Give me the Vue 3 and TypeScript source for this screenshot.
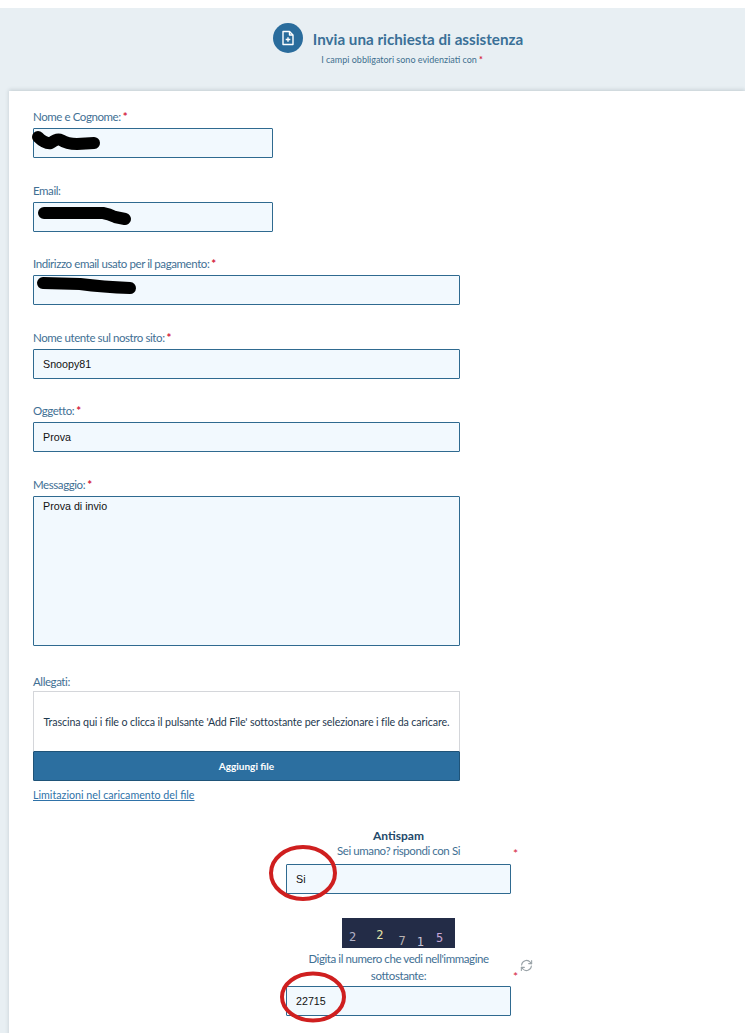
<script setup lang="ts">
interface Field {
  label: string;
  value: string;
  required: boolean;
  short?: boolean;
  scribble?: string;
}

const fields: Field[] = [
  { label: 'Nome e Cognome:', value: '', required: true, short: true, scribble: 'M5 9 Q12 16 18 15 Q24 10 28 12 Q34 16 44 16 L61 15' },
  { label: 'Email:', value: '', required: false, short: true, scribble: 'M11 11 L70 11 Q76 12 82 15 L92 17' },
  { label: 'Indirizzo email usato per il pagamento:', value: '', required: true, scribble: 'M10 8 L47 9 Q70 12 97 13' },
  { label: 'Nome utente sul nostro sito:', value: 'Snoopy81', required: true },
  { label: 'Oggetto:', value: 'Prova', required: true },
];

const captchaDigits = [
  { char: '2', color: '#b4b2c8', top: 13, gap: 7 },
  { char: '2', color: '#e6e6a8', top: 11, gap: 20 },
  { char: '7', color: '#b8b2b0', top: 17, gap: 15 },
  { char: '1', color: '#c8c4d8', top: 18, gap: 11 },
  { char: '5', color: '#c8a8d8', top: 14, gap: 12 },
];

const message = 'Prova di invio';
</script>

<template>
  <div class="page">
    <header class="banner">
      <div class="banner__title-row">
        <span class="banner__icon">
          <svg width="16" height="16" viewBox="0 0 16 16" fill="none" stroke="#fff" stroke-width="1.4" stroke-linejoin="round">
            <path d="M3 1.5h6.5L13 5v9.5H3z" />
            <path d="M9.5 1.5V5H13" />
            <path d="M8 7.2v4.6M5.7 9.5h4.6" />
          </svg>
        </span>
        <h1 class="banner__title">Invia una richiesta di assistenza</h1>
      </div>
      <p class="banner__note">I campi obbligatori sono evidenziati con<span class="star">*</span></p>
    </header>

    <main class="card">
      <div v-for="field in fields" :key="field.label" class="field">
        <label class="field__label">
          {{ field.label }}<span v-if="field.required" class="star">*</span>
        </label>
        <div class="field__control" :class="{ 'field__control--short': field.short }">
          <input class="input" type="text" :value="field.value" />
          <svg v-if="field.scribble" class="scribble" width="110" height="30" viewBox="0 0 110 30" fill="none">
            <path :d="field.scribble" stroke="#000" stroke-width="12" stroke-linecap="round" stroke-linejoin="round" />
          </svg>
        </div>
      </div>

      <div class="field field--message">
        <label class="field__label">Messaggio:<span class="star">*</span></label>
        <div class="field__control">
          <textarea class="input input--area" :value="message"></textarea>
        </div>
      </div>

      <div class="attachments">
        <div class="attachments__label">Allegati:</div>
        <div class="dropzone">Trascina qui i file o clicca il pulsante 'Add File' sottostante per selezionare i file da caricare.</div>
        <button class="add-button" type="button">Aggiungi file</button>
        <a class="limits" href="#">Limitazioni nel caricamento del file</a>
      </div>

      <section class="antispam">
        <div class="antispam__title">Antispam</div>
        <div class="antispam__question">Sei umano? rispondi con Si</div>
        <span class="star star--side star--first">*</span>
        <div class="field__control">
          <input class="input" type="text" value="Si" />
          <svg class="ring ring--first" width="72" height="60" viewBox="0 0 72 60" fill="none">
            <ellipse cx="35" cy="30" rx="32" ry="26" stroke="#cf1f1f" stroke-width="4" />
          </svg>
        </div>

        <div class="captcha">
          <span
            v-for="(digit, index) in captchaDigits"
            :key="index"
            class="captcha__digit"
            :style="{ color: digit.color, marginTop: `${digit.top}px`, marginLeft: `${digit.gap}px` }"
          >{{ digit.char }}</span>
        </div>

        <div class="antispam__question antispam__question--wrap">Digita il numero che vedi nell'immagine sottostante:</div>
        <span class="star star--side star--second">*</span>
        <svg class="refresh" width="13" height="13" viewBox="0 0 24 24" fill="none" stroke="#9aa3a8" stroke-width="2" stroke-linecap="round" stroke-linejoin="round">
          <path d="M3 11a9 9 0 0 1 16-5l2.5 2.5" />
          <path d="M21.5 3v5.5H16" />
          <path d="M21 13a9 9 0 0 1-16 5l-2.5-2.5" />
          <path d="M2.5 21v-5.5H8" />
        </svg>
        <div class="field__control">
          <input class="input" type="text" value="22715" />
          <svg class="ring ring--second" width="70" height="54" viewBox="0 0 70 54" fill="none">
            <ellipse cx="35" cy="27" rx="31" ry="23.5" stroke="#cf1f1f" stroke-width="4" />
          </svg>
        </div>
      </section>
    </main>
  </div>
</template>

<style>
html,
body {
  background: #fff;
  overflow: hidden;
}
</style>

<style scoped>
.page {
  height: 1033px;
  overflow: hidden;
  padding-top: 8px;
  box-sizing: border-box;
  background: linear-gradient(#e8eff3, #e8eff3) no-repeat 0 8px / 100% 100%;
  font-family: Lato, "Open Sans", sans-serif;
  color: #336f96;
}

.banner {
  height: 83px;
  box-sizing: border-box;
  padding: 15px 0 0 51px;
  text-align: center;
}

.banner__title-row {
  display: flex;
  justify-content: center;
  align-items: center;
  gap: 10px;
}

.banner__icon {
  width: 30px;
  height: 30px;
  border-radius: 50%;
  background: #2a6c9c;
  display: flex;
  align-items: center;
  justify-content: center;
}

.banner__title {
  margin: 2px 0 0;
  font-size: 15.2px;
  font-weight: 700;
  color: #3a7097;
}

.banner__note {
  margin: 1px 0 0 8px;
  font-size: 9px;
  line-height: 12px;
  color: #3f6f8f;
}

.star {
  margin-left: 2px;
  color: #d4213d;
  font-weight: 700;
}

.card {
  margin-left: 9px;
  height: 960px;
  background: #fff;
  box-shadow: 0 -1px 4px rgba(60, 80, 90, 0.22);
  padding: 18px 0 0 24px;
  box-sizing: border-box;
}

.field {
  width: 427px;
  margin-bottom: 24.5px;
}

.field__label,
.attachments__label {
  display: block;
  font-size: 11.5px;
  line-height: 16px;
  margin-bottom: 3px;
  letter-spacing: -0.42px;
  color: #3f7094;
}

.field__control {
  position: relative;
  width: 100%;
}

.field__control--short {
  width: 240px;
}

.input {
  display: block;
  width: 100%;
  height: 30px;
  box-sizing: border-box;
  padding: 0 9px;
  border: 1px solid #2f6a90;
  border-radius: 1px;
  background: #f2f9fe;
  font-family: "Liberation Sans", Arial, sans-serif;
  font-size: 10.7px;
  color: #111;
  outline: none;
}

.input--area {
  height: 150px;
  padding-top: 3px;
  resize: none;
}

.scribble {
  position: absolute;
  left: 0;
  top: 0;
  overflow: visible;
}

.attachments {
  width: 427px;
  margin-top: 30px;
}

.attachments__label {
  line-height: 12px;
  margin-bottom: 3px;
}

.dropzone {
  height: 60px;
  box-sizing: border-box;
  border: 1px solid #d4d6da;
  border-bottom: none;
  display: flex;
  align-items: center;
  justify-content: center;
  font-size: 10.7px;
  letter-spacing: -0.12px;
  color: #1f3a50;
  white-space: nowrap;
}

.add-button {
  display: block;
  width: 100%;
  height: 30px;
  border: 1px solid #1f5378;
  border-radius: 1px;
  background: #2c6fa0;
  color: #fff;
  font-family: inherit;
  font-size: 10px;
  font-weight: 700;
}

.limits {
  display: block;
  margin-top: 7px;
  font-size: 10.7px;
  line-height: 14px;
  color: #2f72a8;
}

.antispam {
  position: relative;
  width: 225px;
  margin: 26px 0 0 253px;
  text-align: center;
}

.antispam__title {
  font-size: 12px;
  line-height: 15px;
  font-weight: 700;
  color: #23496a;
}

.antispam__question {
  font-size: 11.5px;
  line-height: 15px;
  margin-bottom: 6px;
  letter-spacing: -0.42px;
  color: #3f7094;
}

.antispam__question--wrap {
  line-height: 17px;
  margin-bottom: 2px;
}

.star--side {
  position: absolute;
  margin: 0;
  font-size: 12px;
  font-weight: 400;
}

.star--first {
  left: 227px;
  top: 18px;
}

.star--second {
  left: 227px;
  top: 141px;
}

.refresh {
  position: absolute;
  left: 234px;
  top: 131px;
}

.ring {
  position: absolute;
  pointer-events: none;
}

.ring--first {
  left: -18px;
  top: -21px;
}

.ring--second {
  left: -8px;
  top: -16px;
}

.captcha {
  display: flex;
  align-items: flex-start;
  width: 113px;
  height: 30px;
  margin: 24px auto 2px;
  background: #232c47;
  overflow: hidden;
}

.captcha__digit {
  font-family: "DejaVu Sans Mono", monospace;
  font-size: 12px;
  line-height: 12px;
}
</style>
